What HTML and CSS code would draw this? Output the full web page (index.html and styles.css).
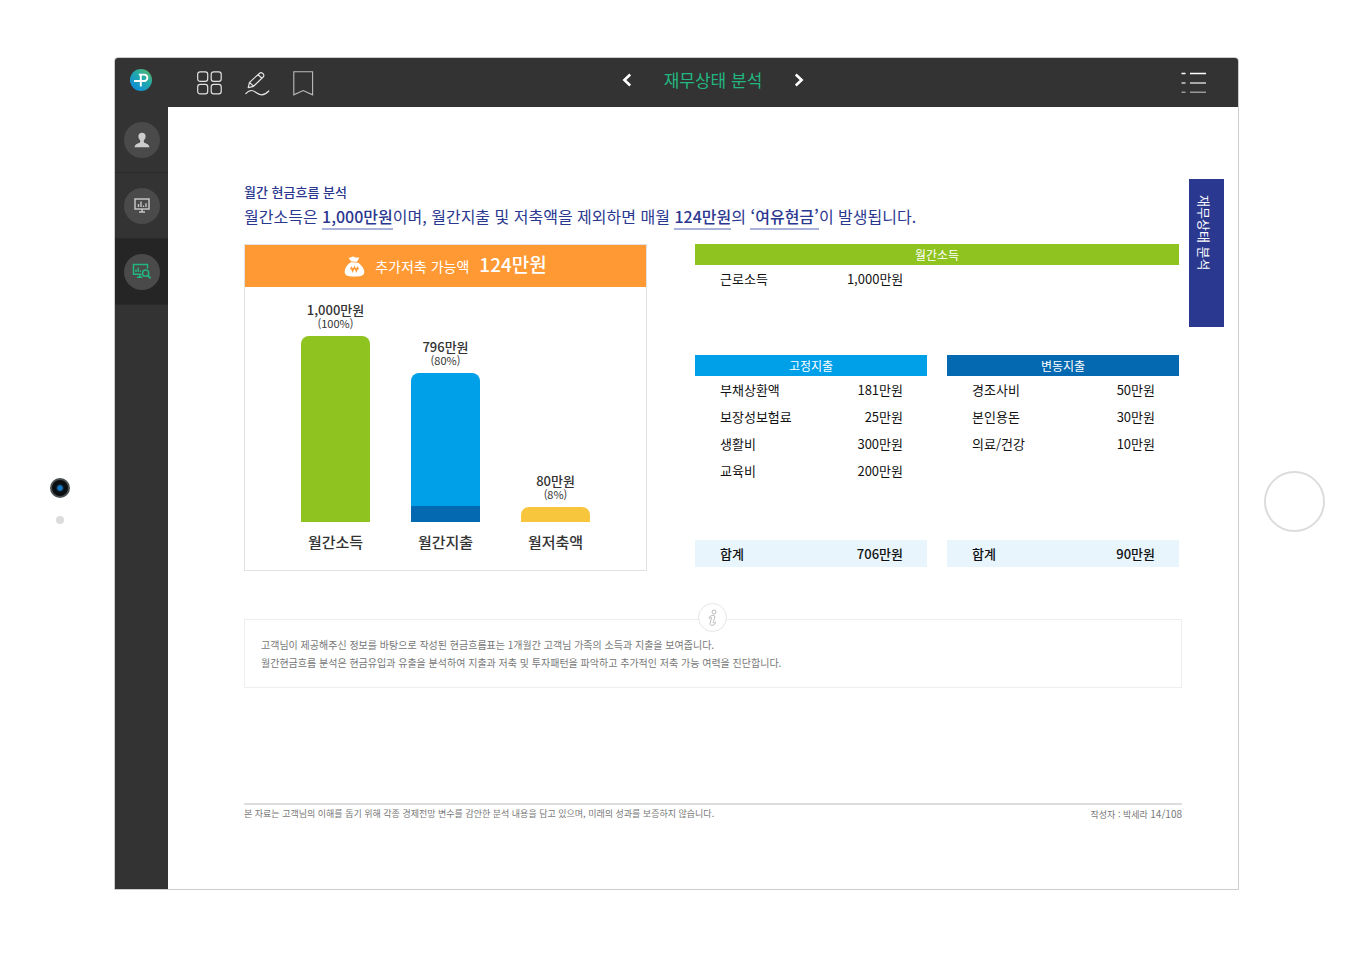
FILE: index.html
```html
<!DOCTYPE html>
<html lang="ko">
<head>
<meta charset="utf-8">
<meta name="viewport" content="width=device-width, initial-scale=1">
<title>재무상태 분석</title>
<link rel="stylesheet" href="styles.css">
</head>
<body>
<div class="tablet">
  <div class="bezel-left">
    <span class="camera"></span>
    <span class="sensor"></span>
  </div>

  <div class="screen">
    <header class="topbar">
      <a class="logo" href="#" aria-label="홈">
        <svg width="22" height="22" viewBox="0 0 22 22">
          <defs><linearGradient id="logo-fill" x1="1" y1="0" x2="0.2" y2="1"><stop offset="0.1" stop-color="#52b56b"/><stop offset="0.45" stop-color="#22abaa"/><stop offset="0.9" stop-color="#1191d4"/></linearGradient></defs>
          <circle cx="11" cy="11" r="11" fill="url(#logo-fill)"/>
          <path d="M4 12H14.2A3.2 3.2 0 0 0 14.2 5.6H8.8M10.8 5.6V17.4" fill="none" stroke="#fff" stroke-width="1.9"/>
        </svg>
      </a>
      <div class="tools">
        <button type="button" aria-label="전체 메뉴">
          <svg width="25" height="24" viewBox="0 0 25 24" fill="none" stroke="#e2e2e2" stroke-width="1.2"><rect x="0.7" y="0.8" width="10" height="9.6" rx="2.4"/><rect x="14.2" y="0.8" width="10" height="9.6" rx="2.4"/><rect x="0.7" y="13.3" width="10" height="9.6" rx="2.4"/><rect x="14.2" y="13.3" width="10" height="9.6" rx="2.4"/></svg>
        </button>
        <button type="button" aria-label="필기">
          <svg width="25" height="25" viewBox="0 0 25 25" fill="none" stroke="#e2e2e2" stroke-width="1.2" stroke-linejoin="round" stroke-linecap="round"><path d="M3.2 16.6L4.5 11.4L14.6 2.2Q16 0.9 17.8 2.5Q19.6 4.2 18.4 5.8L8.5 15.3ZM4.5 11.4L8.5 15.3M13 3.7L17 7.2"/><path d="M0.8 22.6C4 18.8 7.6 18.6 11 21.5C15.2 25 20 24 23.8 20"/></svg>
        </button>
        <button type="button" aria-label="책갈피">
          <svg width="21" height="25" viewBox="0 0 21 25" fill="none" stroke="#bcbcbc" stroke-width="1.1"><path d="M0.8 0.8H19.6V23.8L10.2 19.5L0.8 23.8Z"/></svg>
        </button>
      </div>
      <nav class="pager">
        <button type="button" aria-label="이전"><svg width="10" height="14" viewBox="0 0 10 14"><path d="M8.2 1.5L2.4 7L8.2 12.5" fill="none" stroke="#fff" stroke-width="2.6"/></svg></button>
        <h1>재무상태 분석</h1>
        <button type="button" aria-label="다음"><svg width="10" height="14" viewBox="0 0 10 14"><path d="M1.8 1.5L7.6 7L1.8 12.5" fill="none" stroke="#fff" stroke-width="2.6"/></svg></button>
      </nav>
      <button class="menu" type="button" aria-label="목차">
        <svg width="26" height="22" viewBox="0 0 26 22" stroke-width="1.4"><path d="M0.5 1.5H4.5M9 1.5H25" stroke="#fff"/><path d="M0.5 11H4.5M9 11H25" stroke="#d0d0d0"/><path d="M0.5 20.2H4.5M9 20.2H25" stroke="#999"/></svg>
      </button>
    </header>

    <div class="workspace">
      <nav class="sidebar">
        <a href="#" aria-label="고객"><span>
          <svg width="16" height="16" viewBox="0 0 16 16" fill="#cdcdcd"><path d="M8 0.8C10.3 0.8 11.7 2.4 11.6 4.6C11.5 6.4 10.8 7.5 9.8 8.5V10C10.3 11.5 15.2 11.3 15.4 15.3H0.6C0.8 11.3 5.7 11.5 6.2 10V8.5C5.2 7.5 4.5 6.4 4.4 4.6C4.3 2.4 5.7 0.8 8 0.8Z"/></svg>
        </span></a>
        <a href="#" aria-label="현황"><span>
          <svg width="16" height="15" viewBox="0 0 16 15" fill="none" stroke="#c4c4c4"><path d="M1 1H15V11H1Z" stroke-width="1.5"/><path d="M4.5 9V6M7 9V3.5M9.5 9V7.5M12 9V5.2" stroke-width="1.4"/><path d="M8 11V13.8M5 14H11" stroke-width="1.6"/></svg>
        </span></a>
        <a class="active" href="#" aria-label="재무상태 분석"><span>
          <svg width="20" height="17" viewBox="0 0 20 17" fill="none" stroke="#22b780"><path d="M9.5 11.2H1.5V1.5H15.5V5.5" stroke-width="1.5"/><path d="M4 9V6.5M6.2 9V4.5M8.4 9V7.5" stroke-width="1.4"/><path d="M7.8 11.5V14M5 14.2H10.5" stroke-width="1.5"/><circle cx="13.6" cy="10.2" r="3.1" stroke-width="1.5"/><path d="M15.8 12.4L18.6 15.3" stroke-width="1.9"/></svg>
        </span></a>
      </nav>

      <main class="page">
        <article class="report">
          <p class="kicker">월간 현금흐름 분석</p>
          <h2>월간소득은 <em>1,000만원</em>이며, 월간지출 및 저축액을 제외하면 매월 <em>124만원</em>의 <em>‘여유현금’</em>이 발생됩니다.</h2>

          <div class="columns">
            <section class="chart-card">
              <div class="banner">
                <svg width="21" height="21" viewBox="0 0 21 21"><path d="M4.6 1.7L7 1.6C8 0.3 10 0.2 11 1.6H15.2L14.4 3.4L12.8 6C16.5 8 20.3 12.2 20.3 15.8C20.3 19.2 18 20.6 10.5 20.6S0.7 19.2 0.7 15.8C0.7 12.2 3.5 8 7.5 6Z" fill="#fff"/><path d="M6.2 5.7L14.4 6.4" stroke="#ff9933" stroke-width="0.8"/><path d="M7.2 10.8L8.6 15.2L10.5 11L12.4 15.2L13.8 10.8M6.2 12.7H14.8" fill="none" stroke="#ff9933" stroke-width="1.3"/></svg>
                <span>추가저축 가능액</span>
                <strong>124만원</strong>
              </div>
              <div class="chart">
                <div class="series">
                  <p class="value">1,000만원<small>(100%)</small></p>
                  <div class="bar income" style="height:186px"></div>
                  <p class="name">월간소득</p>
                </div>
                <div class="series">
                  <p class="value">796만원<small>(80%)</small></p>
                  <div class="bar expense" style="height:149px"><div class="variable" style="height:16px"></div></div>
                  <p class="name">월간지출</p>
                </div>
                <div class="series">
                  <p class="value">80만원<small>(8%)</small></p>
                  <div class="bar saving" style="height:15px"></div>
                  <p class="name">월저축액</p>
                </div>
              </div>
            </section>

            <section class="tables">
              <table class="green">
                <colgroup><col class="quarter"><col class="quarter"><col></colgroup>
                <thead><tr><th colspan="3">월간소득</th></tr></thead>
                <tbody><tr><td>근로소득</td><td>1,000만원</td><td></td></tr></tbody>
              </table>
              <div class="pair">
                <table class="sky">
                  <thead><tr><th colspan="2">고정지출</th></tr></thead>
                  <tbody>
                    <tr><td>부채상환액</td><td>181만원</td></tr>
                    <tr><td>보장성보험료</td><td>25만원</td></tr>
                    <tr><td>생활비</td><td>300만원</td></tr>
                    <tr><td>교육비</td><td>200만원</td></tr>
                    <tr class="spacer"><td colspan="2"></td></tr>
                  </tbody>
                  <tfoot><tr><td>합계</td><td>706만원</td></tr></tfoot>
                </table>
                <table class="blue">
                  <thead><tr><th colspan="2">변동지출</th></tr></thead>
                  <tbody>
                    <tr><td>경조사비</td><td>50만원</td></tr>
                    <tr><td>본인용돈</td><td>30만원</td></tr>
                    <tr><td>의료/건강</td><td>10만원</td></tr>
                    <tr><td></td><td></td></tr>
                    <tr class="spacer"><td colspan="2"></td></tr>
                  </tbody>
                  <tfoot><tr><td>합계</td><td>90만원</td></tr></tfoot>
                </table>
              </div>
            </section>
          </div>

          <aside class="note">
            <span class="note-icon">
              <svg width="10" height="18" viewBox="0 0 10 18" fill="#fff" stroke="#b9b9b9" stroke-width="1"><circle cx="6" cy="3" r="2"/><path d="M1.2 8.2C2.6 6.4 6.8 5.6 6.8 7.6C6.8 9.3 5.2 12.6 5.3 13.6C5.5 14.4 6.6 13.5 7.4 13.2C7.6 15 5.4 16.6 3.6 16.4C1.2 16 2.2 13.4 3.6 8.9C3 8.6 2.2 9 1.2 9.3Z"/></svg>
            </span>
            <p>고객님이 제공해주신 정보를 바탕으로 작성된 현금흐름표는 1개월간 고객님 가족의 소득과 지출을 보여줍니다.</p>
            <p>월간현금흐름 분석은 현금유입과 유출을 분석하여 지출과 저축 및 투자패턴을 파악하고 추가적인 저축 가능 여력을 진단합니다.</p>
          </aside>

          <footer>
            <p>본 자료는 고객님의 이해를 돕기 위해 각종 경제전망 변수를 감안한 분석 내용을 담고 있으며, 미래의 성과를 보증하지 않습니다.</p>
            <p>작성자 : 박세라 <b>14/108</b></p>
          </footer>
        </article>
        <a class="tab" href="#">재무상태 분석</a>
      </main>
    </div>
  </div>

  <div class="bezel-right">
    <button class="home" type="button" aria-label="홈 버튼"></button>
  </div>
</div>
</body>
</html>
```
FILE: styles.css
```css
* { box-sizing: border-box; }

body {
  margin: 0;
  background: #fff;
  color: #222;
  font-family: "Noto Sans CJK KR", "Noto Sans", sans-serif;
  font-size: 13px;
}

p, h1, h2 { margin: 0; font-weight: 400; }
a { color: inherit; text-decoration: none; }
svg { display: block; }
button {
  padding: 0;
  border: 0;
  background: none;
  font: inherit;
  cursor: pointer;
}

.tablet {
  display: grid;
  grid-template-columns: 114px 1fr 113px;
  min-height: 100vh;
  padding: 57px 0 72px;
}

.bezel-left {
  display: flex;
  flex-direction: column;
  align-items: center;
  justify-content: center;
  gap: 18px;
  padding: 55px 0 0 6px;
}
.camera {
  width: 20px;
  height: 20px;
  border: 2px solid #4a4f52;
  border-radius: 50%;
  background: radial-gradient(circle, #1678c2 2px, #0c0f12 4px);
}
.sensor { width: 8px; height: 8px; border-radius: 50%; background: #dcdcdc; }

.bezel-right {
  display: flex;
  align-items: center;
  justify-content: center;
  padding: 55px 2px 0 0;
}
.home {
  width: 61px;
  height: 61px;
  border: 2px solid #dcdcdc;
  border-radius: 50%;
}

.screen {
  display: flex;
  flex-direction: column;
  border: 1px solid #ccc;
  border-radius: 4px 4px 0 0;
  overflow: hidden;
}

.topbar {
  display: grid;
  grid-template-columns: 82px 1fr auto 1fr;
  align-items: center;
  height: 49px;
  padding-right: 9px;
  background: #333;
}
.logo { padding: 0 0 5px 15px; }
.tools { display: flex; gap: 23px; padding-top: 1px; }
.pager { display: flex; align-items: center; gap: 32px; padding-bottom: 5px; }
.pager h1 { color: #22b780; font-size: 17px; line-height: 24px; }
.menu { justify-self: end; padding: 0 22px 0 0; }

.workspace { display: flex; flex: 1; }

.sidebar { width: 53px; background: #333; }
.sidebar a {
  display: flex;
  align-items: center;
  justify-content: center;
  height: 66px;
  border-bottom: 1px solid #292929;
}
.sidebar span {
  display: flex;
  align-items: center;
  justify-content: center;
  width: 36px;
  height: 36px;
  border-radius: 50%;
  background: #4a4a4a;
}
.sidebar .active { background: #252525; }

.page {
  display: flex;
  flex: 1;
  align-items: flex-start;
  gap: 7px;
  padding: 72px 14px 64px 76px;
}
.report { flex: 1; }

.kicker { color: #2b388f; font-weight: 500; line-height: 26px; }
h2 { color: #2b388f; font-size: 16px; line-height: 22px; }
h2 em {
  border-bottom: 2px solid #a9b3da;
  font-style: normal;
  font-weight: 500;
}

.columns {
  display: grid;
  grid-template-columns: 403fr 484fr;
  gap: 48px;
  margin-top: 17px;
  padding-right: 3px;
}

.chart-card { border: 1px solid #e2e2e2; }
.banner {
  display: flex;
  align-items: baseline;
  justify-content: center;
  gap: 10px;
  height: 42px;
  background: #ff9933;
  color: #fff;
  font-size: 14px;
  line-height: 38px;
}
.banner svg { align-self: center; }
.banner strong { font-size: 19px; font-weight: 500; }
.chart {
  display: flex;
  align-items: flex-end;
  justify-content: center;
  gap: 41px;
  height: 283px;
  padding-bottom: 16px;
}
.series { width: 69px; color: #333; text-align: center; }
.value { padding-bottom: 6px; font-weight: 500; line-height: 14px; white-space: nowrap; }
.value small { display: block; font-size: 11px; font-weight: 400; line-height: 13px; }
.bar {
  display: flex;
  align-items: flex-end;
  border-radius: 8px 8px 0 0;
}
.income { background: #8fc31f; }
.expense { background: #00a0e9; }
.saving { background: #f8c63c; }
.variable { width: 100%; background: #0569b1; }
.name { padding-top: 8px; font-size: 15px; font-weight: 500; line-height: 24px; }

.tables { display: flex; flex-direction: column; gap: 63px; }
.pair { display: grid; grid-template-columns: 1fr 1fr; gap: 20px; }
table { width: 100%; border-collapse: collapse; table-layout: fixed; color: #111; }
.quarter { width: 24%; }
th { height: 21px; padding: 0; color: #fff; font-size: 12px; font-weight: 400; line-height: 18px; }
td { height: 27px; padding: 0; line-height: 20px; white-space: nowrap; }
td:first-child { padding-left: 25px; }
td:nth-child(2) { padding-right: 24px; text-align: right; }
.spacer td { height: 56px; }
tfoot { background: #e8f5fc; }
tfoot td { font-weight: 500; }
.green th { background: #8fc31f; }
.sky th { background: #00a0e9; }
.blue th { background: #0569b1; }

.note {
  position: relative;
  height: 69px;
  margin-top: 48px;
  padding: 16px;
  border: 1px solid #eee;
  color: #777;
  font-size: 10px;
  line-height: 18px;
}
.note-icon {
  position: absolute;
  top: -17px;
  left: 50%;
  display: flex;
  align-items: center;
  justify-content: center;
  width: 29px;
  height: 29px;
  margin-left: -15px;
  border: 1px solid #e6e6e6;
  border-radius: 50%;
  background: #fff;
}

footer {
  display: flex;
  justify-content: space-between;
  margin-top: 115px;
  padding-top: 1px;
  border-top: 2px solid #ddd;
  color: #777;
  font-size: 9px;
  line-height: 16px;
}
footer b { font-size: 10px; font-weight: 400; }

.tab {
  width: 35px;
  height: 148px;
  padding: 16px 5px 0 0;
  background: #2b388f;
  color: #fff;
  font-size: 13px;
  line-height: 30px;
  writing-mode: vertical-rl;
  text-orientation: sideways;
}
```
